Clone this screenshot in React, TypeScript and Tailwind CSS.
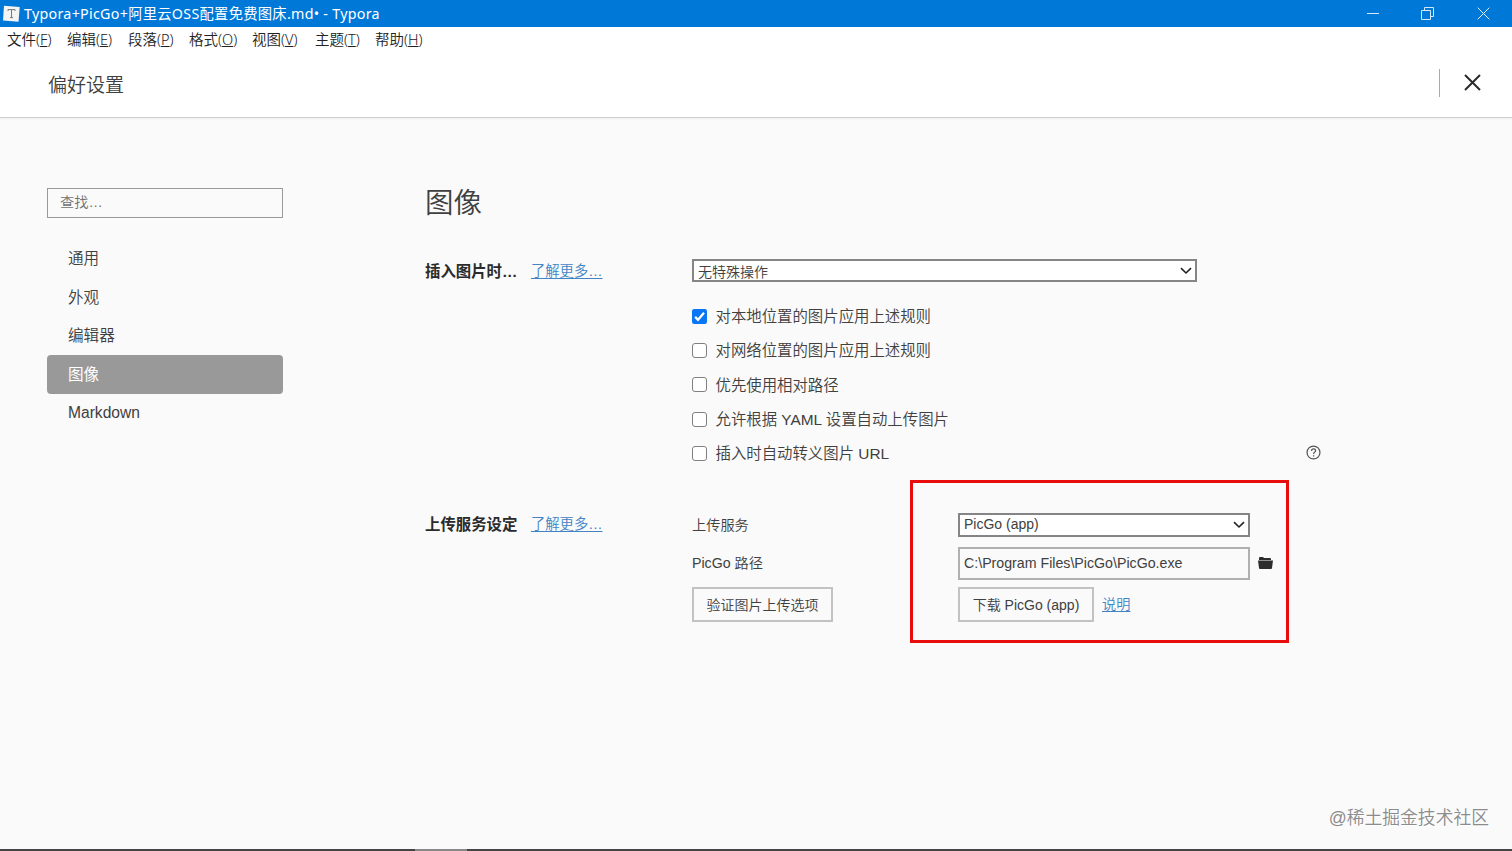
import React from "react";

const sans = "font-['Liberation_Sans','Noto_Sans_CJK_SC',sans-serif]";

const menus: [string, string, string][] = [
  ["文件", "F", "w-[60px]"],
  ["编辑", "E", "w-[61px]"],
  ["段落", "P", "w-[61px]"],
  ["格式", "O", "w-[63px]"],
  ["视图", "V", "w-[63px]"],
  ["主题", "T", "w-[60px]"],
  ["帮助", "H", "w-[60px]"],
];

const nav = ["通用", "外观", "编辑器", "图像", "Markdown"];

const options = [
  "对本地位置的图片应用上述规则",
  "对网络位置的图片应用上述规则",
  "优先使用相对路径",
  "允许根据 YAML 设置自动上传图片",
  "插入时自动转义图片 URL",
];

function Chevron() {
  return (
    <svg className="h-[8px] w-[12px] shrink-0" viewBox="0 0 12 8" fill="none" stroke="#222" strokeWidth="1.6">
      <path d="M1 1.2 6 6 11 1.2" />
    </svg>
  );
}

function Checkbox({ checked }: { checked: boolean }) {
  if (checked) {
    return (
      <svg className="size-[15px] shrink-0" viewBox="0 0 15 15">
        <rect width="15" height="15" rx="2.2" fill="#0a75f5" />
        <path d="M3.1 7.9 6 10.8 12 3.7" fill="none" stroke="#fff" strokeWidth="2.2" />
      </svg>
    );
  }
  return <span className="size-[15px] shrink-0 rounded-[3px] border border-[#808080] bg-white" />;
}

function SectionTitle({ title }: { title: string }) {
  return (
    <div className="flex h-[26px] w-[267px] items-center">
      <span className="w-[106px] text-[15.4px] font-bold text-[#2b2b2b]">{title}</span>
      <a className="text-[14.3px] text-[#4183c4] underline underline-offset-2">了解更多…</a>
    </div>
  );
}

export default function App() {
  return (
    <div className={`flex h-[851px] w-[1512px] flex-col overflow-hidden bg-[#fafafa] font-[350] whitespace-nowrap text-[#404040] ${sans}`}>
      <div className="flex h-[27px] shrink-0 items-center bg-[#0078d7] pl-[3px] text-white">
        <svg className="size-[18px]" viewBox="0 0 18 18">
          <path d="M1 .8 16.7 2 15.5 16.8 0 15.5Z" fill="#f4f4f4" />
          <path d="M5 6V4.6h7V6M8.5 4.6v8M7 12.6h3" fill="none" stroke="#777" strokeWidth="1" />
        </svg>
        <span className="ml-[3px] font-['Noto_Sans','Noto_Sans_CJK_SC',sans-serif] text-[14.3px] font-normal tracking-[0.27px]">
          Typora+PicGo+阿里云OSS配置免费图床.md• - Typora
        </span>
        <div className="ml-auto flex items-center pr-[22px]">
          <svg className="h-[13px] w-[13px]" viewBox="0 0 13 13" stroke="#d4e8fa" fill="none"><path d="M0 6.5h12" /></svg>
          <svg className="ml-[41px] size-[13px]" viewBox="0 0 13 13" stroke="#d4e8fa" fill="none">
            <path d="M.5 3.5h9v9h-9ZM3.5 3.5v-3h9v9h-3" />
          </svg>
          <svg className="ml-[43px] size-[13px]" viewBox="0 0 13 13" stroke="#e4f0fc" fill="none"><path d="m.7.7 11.6 11.6M12.3.7.7 12.3" /></svg>
        </div>
      </div>

      <div className="flex h-[27px] shrink-0 items-center bg-white pb-px pl-[7px] font-['Noto_Sans','Noto_Sans_CJK_SC',sans-serif] text-[14.5px] text-[#222]">
        {menus.map(([name, key, width]) => (
          <span key={key} className={width}>
            {name}(<span className="underline underline-offset-1">{key}</span>)
          </span>
        ))}
      </div>

      <header className="flex h-[64px] shrink-0 items-center border-b border-[#d0d0d0] bg-white pr-[31px] pl-[48px] shadow-[0_1px_2px_rgba(0,0,0,0.05)]">
        <h1 className="pt-[2px] text-[19px]">偏好设置</h1>
        <span className="mr-[24px] mb-[6px] ml-auto h-[28px] w-px bg-[#aaa]" />
        <svg className="mb-[6px] size-[17px]" viewBox="0 0 17 17" fill="none" stroke="#2b2b2b" strokeWidth="2"><path d="m1 1 15 15M16 1 1 16" /></svg>
      </header>

      <div className="flex flex-1 pl-[47px]">
        <aside className="w-[236px] shrink-0 pt-[70px]">
          <div className="flex h-[30px] items-center border border-[#999] px-[12px] pb-px text-[14.2px] text-[#707070]">查找…</div>
          <nav className="mt-[21.6px] flex flex-col">
            {nav.map((item) => (
              <span
                key={item}
                className={`flex h-[38.5px] items-center pl-[21px] text-[15.6px] ${item === "图像" ? "rounded-[4px] bg-[#999] font-normal text-white" : ""}`}
              >
                {item}
              </span>
            ))}
          </nav>
        </aside>

        <main className="ml-[142px] flex w-[897px] flex-col pt-[64px]">
          <h2 className="flex h-[42px] items-center pt-px text-[28.5px]">图像</h2>

          <section className="mt-[35px] flex items-start">
            <SectionTitle title="插入图片时…" />
            <div className="flex flex-1 flex-col">
              <div className="flex h-[23px] w-[505px] items-center justify-between border-2 border-[#858585] bg-white pr-[3px] pl-[4px] text-[14px]">
                <span className="pt-[3px]">无特殊操作</span>
                <Chevron />
              </div>
              <div className="mt-[17.1px] flex flex-col">
                {options.map((option, i) => (
                  <div key={option} className="flex h-[34.3px] items-center">
                    <Checkbox checked={i === 0} />
                    <span className="ml-[8.5px] pt-px text-[15.4px]">{option}</span>
                    {i === 4 && (
                      <svg className="mr-px mb-px ml-auto size-[15px]" viewBox="0 0 16 16" fill="none" stroke="#555" strokeWidth="1.3">
                        <circle cx="8" cy="8" r="6.9" />
                        <path d="M5.9 6.3c0-3 4.3-2.8 4.3-.2 0 1.5-2.1 1.6-2.1 3.4M8.1 10.8v1.4" />
                      </svg>
                    )}
                  </div>
                ))}
              </div>
            </div>
          </section>

          <section className="mt-[41.4px] flex items-start">
            <SectionTitle title="上传服务设定" />
            <div className="relative grid grid-cols-[266px_1fr] text-[14.2px]">
              <span className="flex h-[26px] items-center pt-[2px]">上传服务</span>
              <div className="mt-px flex h-[24px] w-[292px] items-center justify-between border-2 border-[#858585] bg-white pr-[3px] pl-[4px]">
                <span className="pb-px text-[14px]">PicGo (app)</span>
                <Chevron />
              </div>
              <span className="mt-[8px] flex h-[34px] items-center pt-[2px]">PicGo 路径</span>
              <div className="mt-[9px] flex items-center">
                <div className="flex h-[33px] w-[292px] items-center border-2 border-[#b0b0b0] pl-[4px]">C:\Program Files\PicGo\PicGo.exe</div>
                <svg className="ml-[8px] h-[12px] w-[15px]" viewBox="0 0 15 12" fill="#2d2d2d">
                  <path d="M1 3V1q0-1 1-1h3l1 1h6q1 0 1 1v1ZM0 3.6h15l-1 7.4q0 1-1 1H2q-1 0-1-1Z" />
                </svg>
              </div>
              <div className="mt-[7px] flex h-[35px] w-[141px] items-center justify-center border-2 border-[#c2c2c2] pt-[2px] text-[14px]">验证图片上传选项</div>
              <div className="mt-[7px] flex items-center">
                <div className="flex h-[35px] w-[136px] items-center justify-center border-2 border-[#c2c2c2] pt-[2px] text-[14px]">下载 PicGo (app)</div>
                <a className="ml-[8px] text-[#4183c4] underline underline-offset-2">说明</a>
              </div>
              <div className="absolute -top-[32px] left-[218px] h-[163px] w-[379px] border-[3px] border-[#e80c0c]" />
            </div>
          </section>
        </main>
      </div>

      <footer className="flex shrink-0 flex-col">
        <span className="mr-[23px] mb-[17px] self-end text-[17.8px] text-[#8c8c8c] [text-shadow:1px_1px_0_#fff]">@稀土掘金技术社区</span>
        <div className="flex h-[2px] bg-[#444]"><span className="ml-[415px] w-[52px] bg-[#888]" /></div>
      </footer>
    </div>
  );
}
